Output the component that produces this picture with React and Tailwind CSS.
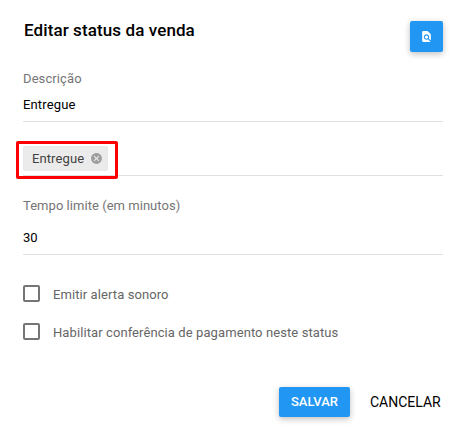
import React from "react";
import { MdFindInPage, MdCancel } from "react-icons/md";

const CheckboxRow = ({ label }) => (
  <label className="flex h-[38px] items-center">
    <span className="mb-px h-[17px] w-[17px] rounded-[2px] border-2 border-[#757575]" />
    <span className="ml-[13px] mt-[2px] text-[13px] tracking-[0.09px] text-[#666]">
      {label}
    </span>
  </label>
);

const App = () => {
  return (
    <div className="h-[433px] w-[466px] overflow-hidden bg-white pl-[23px] pr-[23px] font-['Roboto',sans-serif] text-[13px] leading-5 tracking-[0.04px] text-[#212121]">
      <div className="flex h-[69px] items-start justify-between pt-[21px]">
        <h1 className="pl-px text-[17px] leading-[18px] font-medium tracking-[0.1px] text-black">
          Editar status da venda
        </h1>
        <button className="flex h-[31px] w-[33px] items-center justify-center rounded-[2px] bg-[#2196f3] text-white shadow-[0_2px_6px_rgba(0,0,0,0.25)]">
          <MdFindInPage className="h-[13px] w-[13px]" />
        </button>
      </div>

      <div className="flex h-[53px] flex-col border-b border-[#e0e0e0]">
        <span className="tracking-[0.1px] text-[#757575]">Descrição</span>
        <span className="mt-[6px] tracking-[0.15px] text-black">Entregue</span>
      </div>

      <div className="relative flex h-[54px] items-start border-b border-[#e0e0e0] pt-6">
        <div className="flex h-[25px] w-[85px] items-center rounded-[2px] border border-[#e8e8e8] bg-[#ebebeb] pl-2 text-[#424242]">
          <span className="tracking-[0.1px]">Entregue</span>
          <MdCancel className="ml-[6px] h-[13px] w-[13px] text-[#9e9e9e]" />
        </div>
        <div className="absolute top-[19px] -left-[7px] h-[38px] w-[102px] rounded-[2px] border-3 border-[#ff0000]" />
      </div>

      <div className="flex h-[79px] flex-col border-b border-[#e0e0e0] pt-5">
        <span className="text-[#757575]">Tempo limite (em minutos)</span>
        <span className="mt-3 text-black">30</span>
      </div>

      <div className="pt-5">
        <CheckboxRow label="Emitir alerta sonoro" />
        <CheckboxRow label="Habilitar conferência de pagamento neste status" />
      </div>

      <div className="mt-9 flex items-center text-sm text-black">
        <button className="ml-64 h-[30px] w-[71px] rounded-[2px] bg-[#2196f3] text-[13px] font-medium tracking-normal text-white shadow-[0_2px_6px_rgba(0,0,0,0.25)]">
          SALVAR
        </button>
        <button className="ml-5 tracking-normal">CANCELAR</button>
      </div>
    </div>
  );
};

export default App;
